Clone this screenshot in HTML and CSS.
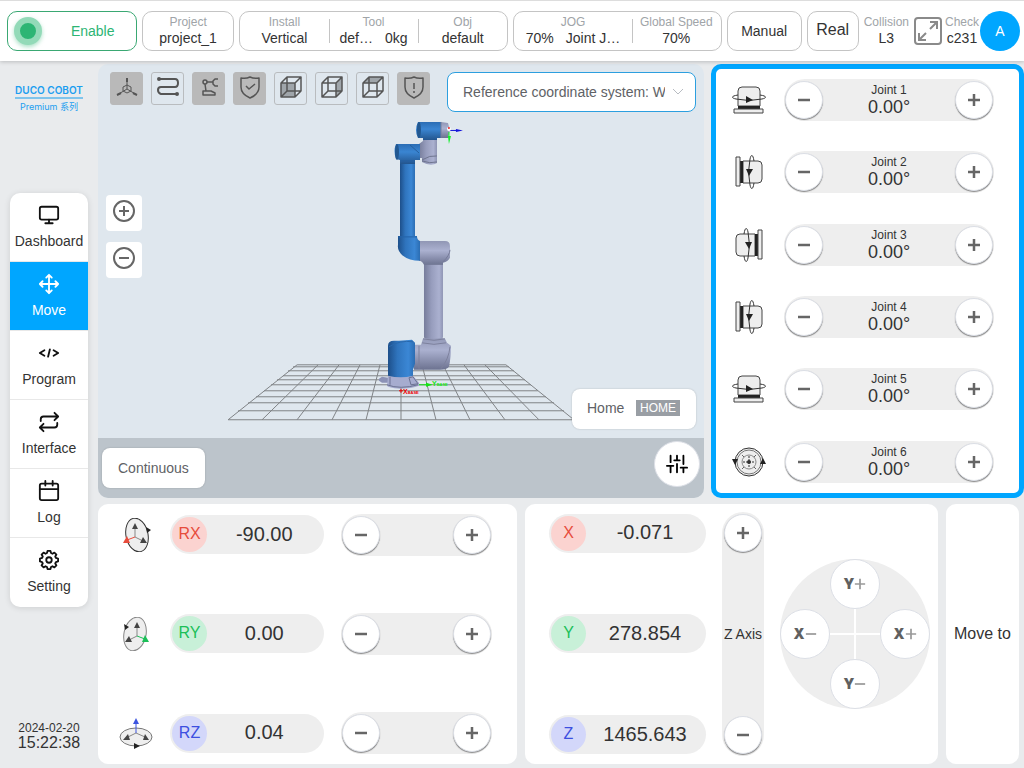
FILE: index.html
```html
<!DOCTYPE html>
<html lang="en">
<head>
    <meta charset="UTF-8">
    <meta name="viewport" content="width=device-width, initial-scale=1.0">
    <title>DUCO COBOT</title>
    <link rel="stylesheet" href="styles.css">
</head>
<body>
    <!-- Shared icons -->
    <svg class="sprite" aria-hidden="true">
        <symbol id="plus" viewBox="0 0 14 14"><path d="M7 1v12M1 7h12"/></symbol>
        <symbol id="minus" viewBox="0 0 14 14"><path d="M1 7h12"/></symbol>
        <symbol id="joint" viewBox="0 0 34 34">
            <path d="M6 23V8Q6 4 10 4H24Q28 4 28 8V23Z" fill="#eee" stroke="#444"/>
            <path d="M6 12C-1 13 -1 15 4 16Q17 19 30 16C35 15 35 13 28 12" fill="none" stroke="#333"/>
            <path d="M6 23H28V26H6Z" fill="#222"/>
            <path d="M2 26H31V30H2Z" fill="#eee" stroke="#444"/>
            <path d="M14 13L21 17L14 20Z" fill="#222"/>
        </symbol>
        <symbol id="cube" viewBox="0 0 24 24">
            <path d="M2 8H16V22H2ZM8 2H22V16H8ZM2 8L8 2M16 8L22 2M16 22L22 16M2 22L8 16"/>
        </symbol>
    </svg>

    <header class="header">
        <button class="box enable"><span class="led"></span><span class="enable-text">Enable</span></button>
        <div class="box project">
            <div class="cell"><span class="label">Project</span><span class="value">project_1</span></div>
        </div>
        <div class="box setup">
            <div class="cell"><span class="label">Install</span><span class="value">Vertical</span></div>
            <div class="cell"><span class="label">Tool</span><span class="value pair"><span>def…</span><span>0kg</span></span></div>
            <div class="cell"><span class="label">Obj</span><span class="value">default</span></div>
        </div>
        <div class="box speed">
            <div class="cell jog-cell"><span class="label">JOG</span><span class="value pair"><span>70%</span><span>Joint J…</span></span></div>
            <div class="cell"><span class="label">Global Speed</span><span class="value">70%</span></div>
        </div>
        <button class="box manual">Manual</button>
        <button class="box real">Real</button>
        <div class="cell collision"><span class="label">Collision</span><span class="value">L3</span></div>
        <div class="user">
            <button class="expand" aria-label="Full screen">
                <svg width="28" height="28" viewBox="0 0 28 28" fill="none" stroke="#8a8a8a" stroke-width="2">
                    <rect x="1" y="1" width="26" height="26" rx="3"/>
                    <path d="M16 5H23V12M23 5L16 12M5 16V23H12M5 23L12 16"/>
                </svg>
            </button>
            <div class="cell"><span class="label">Check</span><span class="value">c231</span></div>
            <button class="avatar">A</button>
        </div>
    </header>

    <div class="main">
        <aside class="sidebar">
            <div class="logo">
                <span class="logo-name">DUCO COBOT</span>
                <span class="logo-sub">Premium 系列</span>
            </div>
            <nav class="nav">
                <a href="#dashboard"><svg viewBox="0 0 24 24"><rect x="2" y="3" width="20" height="14" rx="2"/><path d="M8 21h8M12 17v4"/></svg>Dashboard</a>
                <a href="#move" class="active"><svg viewBox="0 0 24 24"><path d="M5 9l-3 3 3 3M9 5l3-3 3 3M15 19l-3 3-3-3M19 9l3 3-3 3M2 12h20M12 2v20"/></svg>Move</a>
                <a href="#program"><svg viewBox="0 0 24 24"><path d="M7 9l-5 3 5 3M17 9l5 3-5 3M13 8l-2 8"/></svg>Program</a>
                <a href="#interface"><svg viewBox="0 0 24 24"><path d="M18 2l4 4-4 4M3 11V9a3 3 0 0 1 3-3h15M6 22l-4-4 4-4M21 13v2a3 3 0 0 1-3 3H3"/></svg>Interface</a>
                <a href="#log"><svg viewBox="0 0 24 24"><rect x="2" y="4" width="20" height="18" rx="2"/><path d="M2 10h20M8 1v5M16 1v5"/></svg>Log</a>
                <a href="#setting"><svg viewBox="0 0 24 24"><circle cx="12" cy="12" r="3"/><path d="M10.400 2.100L13.600 2.100L14.200 4.400L15.800 5.200L17.900 3.900L20.100 6.100L18.800 8.200L19.600 9.800L21.900 10.400V13.600L19.600 14.200L18.800 15.800L20.100 17.900L17.900 20.100L15.800 18.800L14.200 19.600L13.600 21.900H10.400L9.800 19.600L8.200 18.800L6.100 20.100L3.900 17.900L5.200 15.800L4.400 14.200L2.100 13.600V10.400L4.400 9.800L5.200 8.200L3.900 6.100L6.100 3.900L8.200 5.200L9.800 4.400Z"/></svg>Setting</a>
            </nav>
            <div class="clock">
                <span class="date">2024-02-20</span>
                <span class="time">15:22:38</span>
            </div>
        </aside>

        <main class="content">
            <div class="top-row">
                <section class="view">
                    <div class="scene">
                        <svg class="robot" viewBox="98 64 606 374">
                            <defs>
                                <linearGradient id="blueV"><stop offset="0" stop-color="#1d4f8a"/><stop offset=".35" stop-color="#2f74bd"/><stop offset=".75" stop-color="#3b87d5"/><stop offset="1" stop-color="#2b6db3"/></linearGradient>
                                <linearGradient id="blueH" x2="0" y2="1"><stop offset="0" stop-color="#2b6db4"/><stop offset=".4" stop-color="#3a85d2"/><stop offset="1" stop-color="#23558e"/></linearGradient>
                                <linearGradient id="grayV"><stop offset="0" stop-color="#777d9b"/><stop offset=".4" stop-color="#979dbd"/><stop offset=".8" stop-color="#abb1d0"/><stop offset="1" stop-color="#8e94b3"/></linearGradient>
                                <linearGradient id="grayH" x2="0" y2="1"><stop offset="0" stop-color="#9096b4"/><stop offset=".4" stop-color="#abb1d0"/><stop offset="1" stop-color="#6c7290"/></linearGradient>
                            </defs>
                            <!-- Floor grid -->
                            <g stroke="#7f8386" fill="none">
                                <path d="M297 365H506M293 367H509M288 371H514M283 376H520M277 380H525M271 385H531M264 391H538M256 397H546M248 403H554M238 411H564M228 420H574"/>
                                <path d="M297 365L228 420M318 365L262 420M339 365L297 420M360 365L332 420M380 365L366 420M401 365V420M422 365L436 420M443 365L470 420M464 365L505 420M485 365L539 420M506 365L574 420"/>
                            </g>
                            <!-- Base -->
                            <path d="M379 379L382 377L388 378V383L382 383L379 381Z" fill="#8b92b6"/>
                            <path d="M388 376H413L419 383V386Q412 389 400 389Q388 388 387 386Z" fill="#a6accf"/>
                            <path d="M387 385Q400 390 418 385M390 377V385M409 378L413 377L418 384L411 385Z" stroke="#6a7192" fill="none"/>
                            <path d="M414 345H421L423 339Q433 335 445 339L447 343L451 346Q451 358 449 367Q447 370 440 370H414Z" fill="url(#grayH)"/>
                            <path d="M441 369Q449 359 450 347M422 343Q434 346 446 343M423 339Q434 342 445 339M419 346V369" stroke="#7c819d" fill="none"/>
                            <path d="M388 346Q388 341 394 341H399L412 340L415 343V364L413 370V376Q401 379 388 376Z" fill="url(#blueV)"/>
                            <path d="M389 347Q400 340 413 342" stroke="#2968ad" fill="none"/>
                            <!-- Lower arm -->
                            <path d="M424 262H443V338Q433 340 424 338Z" fill="url(#grayV)"/>
                            <path d="M419 241H445Q450 241 450 246V258Q448 262 443 263V265H424Q422 261 419 261Z" fill="url(#grayH)"/>
                            <path d="M443 262Q450 255 450 250M424 264H443" stroke="#747a98" fill="none"/>
                            <!-- Upper arm -->
                            <path d="M400 158H415V237H400Z" fill="url(#blueV)"/>
                            <path d="M398 236H417Q417 240 420 241V261Q409 261 403 256T398 245Z" fill="url(#blueV)"/>
                            <path d="M398 237H417" stroke="#2363a9"/>
                            <!-- Wrist -->
                            <path d="M419 144L423 141V138H437V163Q431 167 422 162V158H419Z" fill="url(#grayV)"/>
                            <path d="M422 160Q430 155 437 156M422 161Q430 164 437 162" stroke="#6e748f" fill="none"/>
                            <path d="M396 144H420V160H415V164H400V160L396 159Q393 151 396 144Z" fill="url(#blueH)"/>
                            <ellipse cx="397" cy="152" rx="2" ry="8" fill="#225891"/>
                            <path d="M400 161H415M410 145L419 153" stroke="#265f9f"/>
                            <path d="M418 122H441V138H437V140H423V138H418Q414 130 418 122Z" fill="url(#blueH)"/>
                            <ellipse cx="419" cy="130" rx="2" ry="8" fill="#225891"/>
                            <path d="M441 122L448 123L450 130L448 138L441 138Z" fill="url(#grayH)"/>
                            <path d="M441 122V138" stroke="#777d9b"/>
                            <!-- Tool axes -->
                            <path d="M450 130.500H458" stroke="#1515dc"/><path d="M456 129L463 130.500L456 132Z" fill="#1515dc"/>
                            <path d="M449 132V138" stroke="#13f02a"/><path d="M448 136H451L449 144Z" fill="#13f02a"/>
                            <circle cx="449" cy="129" r="2" fill="#fff"/><circle cx="449" cy="128" r="1" fill="#e22"/>
                            <!-- Base axes -->
                            <path d="M419 385H428" stroke="#12e612"/><path d="M426 383L433 385L426 387Z" fill="#12e612"/>
                            <path d="M399 391H403M401 389V393" stroke="#e00"/>
                            <text class="axis-name" x="403" y="394" fill="#e00">X<tspan class="axis-sub">BASE</tspan></text>
                            <text class="axis-name" x="432" y="386" fill="#12e612">Y<tspan class="axis-sub">BASE</tspan></text>
                        </svg>
                        <div class="toolbar">
                            <div class="tools">
                                <button class="tool on thin" aria-label="Axes"><svg viewBox="0 0 24 24"><path d="M12 10L16 12V16L12 18L8 16V12ZM12 14V3M12 14L2 20M12 14L22 20"/><path d="M12 3v4M2 20l4-2M22 20l-4-2" stroke-width="2"/></svg></button>
                                <button class="tool bold" aria-label="Trajectory"><svg viewBox="0 0 24 24"><path d="M3 4H19Q22 4 22 8T19 12H5Q2 12 2 15T5 19H21"/><circle cx="3" cy="4" r="1"/><circle cx="21" cy="19" r="1"/></svg></button>
                                <button class="tool on" aria-label="Robot model"><svg viewBox="0 0 24 24"><path d="M6 16H14L18 18V20H6ZM8 9L9 16M10 7H16M21 4L18 4L16 6V9L18 11H21"/><circle cx="8" cy="7" r="2"/></svg></button>
                                <button class="tool on" aria-label="Safety"><svg viewBox="0 0 24 24"><path d="M3 3Q8 4 12 2Q16 4 21 3V12Q21 19 12 23Q3 19 3 12ZM8 11L11 14L17 9"/></svg></button>
                                <button class="tool" aria-label="Front view"><svg viewBox="0 0 24 24"><path class="face" d="M2 8H16V22H2Z"/><use href="#cube"/></svg></button>
                                <button class="tool" aria-label="Side view"><svg viewBox="0 0 24 24"><path class="face" d="M16 8L22 2V16L16 22Z"/><use href="#cube"/></svg></button>
                                <button class="tool" aria-label="Top view"><svg viewBox="0 0 24 24"><path class="face" d="M2 8L8 2H22L16 8Z"/><use href="#cube"/></svg></button>
                                <button class="tool on" aria-label="Warning"><svg viewBox="0 0 24 24"><path d="M3 3Q8 4 12 2Q16 4 21 3V12Q21 19 12 23Q3 19 3 12ZM12 8V14M12 16V18"/></svg></button>
                            </div>
                            <div class="coord">
                                <select aria-label="Reference coordinate system">
                                    <option>Reference coordinate system: World</option>
                                </select>
                                <svg width="12" height="8" viewBox="0 0 12 8" fill="none" stroke="#b8bcc2"><path d="M1 1l5 5 5-5"/></svg>
                            </div>
                        </div>
                        <div class="zoom">
                            <button aria-label="Zoom in"><svg viewBox="0 0 24 24"><circle cx="12" cy="12" r="10"/><path d="M12 7v10M7 12h10"/></svg></button>
                            <button aria-label="Zoom out"><svg viewBox="0 0 24 24"><circle cx="12" cy="12" r="10"/><path d="M7 12h10"/></svg></button>
                        </div>
                        <button class="home">Home <span class="badge">HOME</span></button>
                    </div>
                    <div class="view-bar">
                        <button class="continuous">Continuous</button>
                        <button class="sliders" aria-label="Options"><svg viewBox="0 0 24 24"><path d="M5 21v-6M5 10V3M12 21v-9M12 8V3M19 21v-5M19 12V3M1 14h7M9 8h6M16 16h7"/></svg></button>
                    </div>
                </section>

                <section class="joints">
                    <div class="joint-row">
                        <svg class="icon"><use href="#joint"/></svg>
                        <div class="jog">
                            <button class="round" aria-label="Joint 1 minus"><svg><use href="#minus"/></svg></button>
                            <div class="reading"><span class="name">Joint 1</span><span class="angle">0.00°</span></div>
                            <button class="round" aria-label="Joint 1 plus"><svg><use href="#plus"/></svg></button>
                        </div>
                    </div>
                    <div class="joint-row">
                        <svg class="icon turn"><use href="#joint"/></svg>
                        <div class="jog">
                            <button class="round" aria-label="Joint 2 minus"><svg><use href="#minus"/></svg></button>
                            <div class="reading"><span class="name">Joint 2</span><span class="angle">0.00°</span></div>
                            <button class="round" aria-label="Joint 2 plus"><svg><use href="#plus"/></svg></button>
                        </div>
                    </div>
                    <div class="joint-row">
                        <svg class="icon turn-back"><use href="#joint"/></svg>
                        <div class="jog">
                            <button class="round" aria-label="Joint 3 minus"><svg><use href="#minus"/></svg></button>
                            <div class="reading"><span class="name">Joint 3</span><span class="angle">0.00°</span></div>
                            <button class="round" aria-label="Joint 3 plus"><svg><use href="#plus"/></svg></button>
                        </div>
                    </div>
                    <div class="joint-row">
                        <svg class="icon turn"><use href="#joint"/></svg>
                        <div class="jog">
                            <button class="round" aria-label="Joint 4 minus"><svg><use href="#minus"/></svg></button>
                            <div class="reading"><span class="name">Joint 4</span><span class="angle">0.00°</span></div>
                            <button class="round" aria-label="Joint 4 plus"><svg><use href="#plus"/></svg></button>
                        </div>
                    </div>
                    <div class="joint-row">
                        <svg class="icon"><use href="#joint"/></svg>
                        <div class="jog">
                            <button class="round" aria-label="Joint 5 minus"><svg><use href="#minus"/></svg></button>
                            <div class="reading"><span class="name">Joint 5</span><span class="angle">0.00°</span></div>
                            <button class="round" aria-label="Joint 5 plus"><svg><use href="#plus"/></svg></button>
                        </div>
                    </div>
                    <div class="joint-row">
                        <svg class="icon" viewBox="0 0 34 34" fill="none" stroke="#333">
                            <circle cx="17" cy="17" r="14" fill="#eee"/><circle cx="17" cy="17" r="12" stroke="#777"/><circle cx="17" cy="17" r="7" stroke="#888"/>
                            <circle cx="17" cy="17" r="2" fill="#333" stroke="none"/>
                            <path d="M11 17h12M17 11v12" stroke-dasharray="2 1"/>
                            <path d="M10 10l2 2M24 10l-2 2M10 24l2-2M24 24l-2-2" stroke="#666"/>
                            <path d="M0 14H6L3 20ZM28 19L31 13L34 19Z" fill="#222" stroke="none"/>
                        </svg>
                        <div class="jog">
                            <button class="round" aria-label="Joint 6 minus"><svg><use href="#minus"/></svg></button>
                            <div class="reading"><span class="name">Joint 6</span><span class="angle">0.00°</span></div>
                            <button class="round" aria-label="Joint 6 plus"><svg><use href="#plus"/></svg></button>
                        </div>
                    </div>
                </section>
            </div>

            <div class="bottom-row">
                <section class="panel rotation">
                    <div class="rot-row">
                        <svg class="icon" viewBox="0 0 34 34">
                            <ellipse cx="18" cy="17" rx="11" ry="17" transform="rotate(-12 18 17)" fill="#eee" stroke="#333"/>
                            <path d="M16 19V10M16 19L24 23" stroke="#888"/>
                            <path d="M16 19L8 22" stroke="#e74c3c"/>
                            <path d="M13 11L16 5L19 11ZM21 25L24 19L28 25Z" fill="#444"/>
                            <path d="M4 25L8 18L11 25Z" fill="#e74c3c"/>
                            <path d="M27 9L32 12L28 15Z" fill="#222"/>
                        </svg>
                        <div class="pill"><span class="tag red">RX</span><span class="num">-90.00</span></div>
                        <div class="jog">
                            <button class="round" aria-label="RX minus"><svg><use href="#minus"/></svg></button>
                            <button class="round" aria-label="RX plus"><svg><use href="#plus"/></svg></button>
                        </div>
                    </div>
                    <div class="rot-row">
                        <svg class="icon" viewBox="0 0 34 34">
                            <ellipse cx="16" cy="17" rx="11" ry="17" transform="rotate(12 16 17)" fill="#eee" stroke="#888"/>
                            <path d="M18 19V10M18 19L10 23" stroke="#888"/>
                            <path d="M18 19L26 22" stroke="#1bbf58"/>
                            <path d="M15 11L18 5L21 11ZM6 25L10 19L13 25Z" fill="#444"/>
                            <path d="M23 25L26 18L30 25Z" fill="#1bbf58"/>
                            <path d="M5 7L10 10L6 13Z" fill="#222"/>
                        </svg>
                        <div class="pill"><span class="tag green">RY</span><span class="num">0.00</span></div>
                        <div class="jog">
                            <button class="round" aria-label="RY minus"><svg><use href="#minus"/></svg></button>
                            <button class="round" aria-label="RY plus"><svg><use href="#plus"/></svg></button>
                        </div>
                    </div>
                    <div class="rot-row">
                        <svg class="icon" viewBox="0 0 34 34">
                            <ellipse cx="17" cy="21" rx="16" ry="9" fill="#eee" stroke="#777"/>
                            <path d="M17 17L9 21M17 17L26 21" stroke="#888"/>
                            <path d="M17 17V8" stroke="#3d55e0"/>
                            <path d="M4 24L9 18L11 24ZM24 24L26 18L30 24Z" fill="#444"/>
                            <path d="M14 8L17 2L20 8Z" fill="#3d55e0"/>
                            <path d="M15 27L21 30L15 33Z" fill="#222"/>
                        </svg>
                        <div class="pill"><span class="tag blue">RZ</span><span class="num">0.04</span></div>
                        <div class="jog">
                            <button class="round" aria-label="RZ minus"><svg><use href="#minus"/></svg></button>
                            <button class="round" aria-label="RZ plus"><svg><use href="#plus"/></svg></button>
                        </div>
                    </div>
                </section>

                <section class="panel position">
                    <div class="coords">
                        <div class="pill"><span class="tag red">X</span><span class="num">-0.071</span></div>
                        <div class="pill"><span class="tag green">Y</span><span class="num">278.854</span></div>
                        <div class="pill"><span class="tag blue">Z</span><span class="num">1465.643</span></div>
                    </div>
                    <div class="jog z-axis">
                        <button class="round" aria-label="Z plus"><svg><use href="#plus"/></svg></button>
                        <span>Z Axis</span>
                        <button class="round" aria-label="Z minus"><svg><use href="#minus"/></svg></button>
                    </div>
                    <div class="dpad">
                        <button class="up" aria-label="Y plus">Y<svg><use href="#plus"/></svg></button>
                        <button class="left" aria-label="X minus">X<svg><use href="#minus"/></svg></button>
                        <span class="cross"></span>
                        <button class="right" aria-label="X plus">X<svg><use href="#plus"/></svg></button>
                        <button class="down" aria-label="Y minus">Y<svg><use href="#minus"/></svg></button>
                    </div>
                </section>

                <button class="panel move-to">Move to</button>
            </div>
        </main>
    </div>
</body>
</html>
```
FILE: styles.css
```css
* {
    box-sizing: border-box;
}
body {
    margin: 0;
    min-height: 100vh;
    display: flex;
    flex-direction: column;
    background: #e9ebed;
    color: #333;
    font-family: "Liberation Sans", Arial, sans-serif;
    font-size: 14px;
}
button {
    padding: 0;
    border: none;
    background: white;
    color: #333;
    font: inherit;
    cursor: pointer;
}
svg {
    display: block;
    flex: none;
}
.sprite {
    position: absolute;
    width: 0;
    height: 0;
}

/* Header */
.header {
    display: flex;
    align-items: center;
    gap: 5px;
    height: 61px;
    padding: 0 4px 0 7px;
    background: white;
    border-top: 1px solid #ddd;
    box-shadow: 0 1px 4px rgba(0, 0, 0, 0.2);
    position: relative;
    z-index: 1;
}
.box {
    display: flex;
    align-items: center;
    justify-content: center;
    height: 40px;
    border: 1px solid #c4c4c4;
    border-radius: 10px;
}
.enable {
    flex: 1 1 130px;
    justify-content: flex-start;
    padding-left: 6px;
    border-color: #3aa873;
    color: #2db574;
}
.led {
    width: 28px;
    height: 28px;
    border: 6px solid #93dab8;
    border-radius: 50%;
    background: #2db574;
    box-shadow: 0 2px 4px rgba(45, 181, 116, 0.4);
}
.enable-text {
    flex: 1;
    padding-left: 7px;
}
.project {
    flex: 1 1 91px;
}
.setup {
    flex: 1 1 269px;
}
.speed {
    flex: 1 1 208px;
}
.manual {
    flex: 0 0 75px;
}
.real {
    flex: 0 0 52px;
    padding-bottom: 2px;
    font-size: 16px;
}
.cell {
    display: flex;
    flex-direction: column;
    align-items: center;
    padding-bottom: 1px;
    white-space: nowrap;
}
.box .cell {
    flex: 1 1 89px;
}
.box .jog-cell {
    flex-basis: 118px;
}
.box .cell + .cell {
    flex-basis: 89px;
    position: relative;
}
.box .cell + .cell::before {
    content: "";
    position: absolute;
    left: 0;
    top: 4px;
    bottom: 4px;
    border-left: 1px solid #c4c4c4;
}
.label {
    color: #a0a4a8;
    font-size: 12px;
    line-height: 15px;
}
.value {
    line-height: 16px;
}
.pair {
    display: flex;
    gap: 12px;
}
.user {
    display: flex;
    align-items: center;
    gap: 1px;
}
.expand {
    width: 30px;
}
.avatar {
    width: 40px;
    height: 40px;
    border-radius: 50%;
    background: #00a6ff;
    color: white;
}

/* Sidebar */
.main {
    flex: 1;
    display: flex;
}
.sidebar {
    flex: 0 0 98px;
    display: flex;
    flex-direction: column;
    align-items: center;
}
.logo {
    display: flex;
    flex-direction: column;
    align-items: center;
    height: 132px;
    padding-top: 22px;
    color: #1c9ef0;
    font-family: Inter, "Noto Sans CJK SC", sans-serif;
}
.logo-name {
    border-bottom: 2px solid #7fc4ec;
    font-size: 10px;
    font-weight: 600;
    line-height: 14px;
    white-space: nowrap;
}
.logo-sub {
    font-size: 9px;
    line-height: 15px;
}
.nav {
    width: 78px;
    border-radius: 10px;
    background: white;
    box-shadow: 0 1px 6px rgba(0, 0, 0, 0.12);
    overflow: hidden;
}
.nav a {
    display: flex;
    flex-direction: column;
    align-items: center;
    gap: 7px;
    height: 69px;
    padding-top: 11px;
    border-bottom: 1px solid #e8e8e8;
    color: #333;
    line-height: 16px;
    text-decoration: none;
}
.nav a:last-child {
    border-bottom: none;
}
.nav svg {
    width: 22px;
    height: 22px;
    fill: none;
    stroke: #111;
    stroke-width: 2;
    stroke-linecap: round;
    stroke-linejoin: round;
}
.nav .active {
    background: #00a6ff;
    color: white;
}
.nav .active svg {
    stroke: white;
}
.clock {
    display: flex;
    flex-direction: column;
    align-items: center;
    margin-top: auto;
    padding-bottom: 17px;
}
.date {
    font-size: 12px;
    line-height: 14px;
}
.time {
    font-size: 16px;
    line-height: 16px;
}

/* Content grid */
.content {
    flex: 1;
    display: grid;
    grid-template-rows: 5fr 3fr;
    gap: 6px;
    padding: 3px 0 4px;
}
.top-row {
    display: grid;
    grid-template-columns: 1fr 313px;
    gap: 7px;
}
.bottom-row {
    display: grid;
    grid-template-columns: 1fr 413px 73px;
    gap: 8px;
    padding-right: 5px;
}

/* 3D view */
.view {
    display: flex;
    flex-direction: column;
    border-radius: 10px;
    background: #dfe7ee;
    overflow: hidden;
}
.scene {
    flex: 1;
    display: flex;
    flex-direction: column;
    padding: 8px 8px 9px;
    position: relative;
}
.robot {
    position: absolute;
    left: 0;
    top: 0;
    width: 100%;
    height: 100%;
}
.axis-name {
    font-size: 7px;
    font-weight: bold;
}
.axis-sub {
    font-size: 4px;
}
.toolbar {
    display: flex;
    justify-content: space-between;
    padding-left: 4px;
    position: relative;
}
.tools {
    display: flex;
    gap: 8px;
}
.tool {
    display: flex;
    justify-content: center;
    width: 33px;
    height: 33px;
    padding-top: 2px;
    border: 1px solid #b9bcbf;
    border-radius: 3px;
    background: transparent;
}
.tool.on {
    background: #b9b9b9;
    border-color: #b9b9b9;
}
.tool svg {
    width: 24px;
    height: 24px;
    fill: none;
    stroke: #555;
    stroke-width: 1.5;
    stroke-linejoin: round;
}
.tool.thin svg {
    stroke-width: 1;
}
.tool.bold svg {
    stroke-width: 2;
}
.tool .face {
    fill: #9fa5aa;
    stroke: none;
}
.coord {
    display: flex;
    align-items: center;
    width: 249px;
    position: relative;
}
.coord select {
    width: 100%;
    height: 40px;
    padding: 0 30px 0 15px;
    appearance: none;
    border: 1px solid #2c9fdf;
    border-radius: 8px;
    background: white;
    color: #606266;
    font: inherit;
}
.coord svg {
    position: absolute;
    right: 12px;
    top: 16px;
    pointer-events: none;
}
.zoom {
    display: flex;
    flex-direction: column;
    gap: 11px;
    width: 36px;
    margin-top: 83px;
    position: relative;
}
.zoom button {
    display: flex;
    justify-content: center;
    height: 36px;
    padding-top: 4px;
    border-radius: 4px;
}
.zoom svg {
    width: 24px;
    height: 24px;
    fill: none;
    stroke: #666;
    stroke-width: 2;
}
.home {
    display: flex;
    align-items: center;
    justify-content: space-between;
    align-self: flex-end;
    width: 124px;
    height: 40px;
    margin-top: auto;
    padding: 0 16px 2px 15px;
    border-radius: 8px;
    box-shadow: 0 0 2px rgba(0, 0, 0, 0.2);
    color: #606266;
    position: relative;
}
.badge {
    padding: 0 4px;
    background: #999ea4;
    color: white;
    font-size: 12px;
    line-height: 16px;
}
.view-bar {
    display: flex;
    align-items: center;
    justify-content: space-between;
    height: 60px;
    padding: 0 4px;
    background: #bcc4cb;
}
.continuous {
    height: 40px;
    padding: 0 16px;
    border-radius: 8px;
    box-shadow: 0 0 2px rgba(0, 0, 0, 0.2);
    color: #606266;
}
.sliders {
    display: flex;
    align-items: center;
    justify-content: center;
    width: 46px;
    height: 46px;
    margin-bottom: 8px;
    border: 1px solid #dcdfe6;
    border-radius: 50%;
}
.sliders svg {
    width: 22px;
    height: 22px;
    fill: none;
    stroke: black;
    stroke-width: 2;
    stroke-linecap: round;
}

/* Jog controls */
.icon {
    width: 34px;
    height: 34px;
}
.turn {
    transform: rotate(90deg);
}
.turn-back {
    transform: rotate(90deg) scaleY(-1);
}
.jog {
    display: flex;
    align-items: center;
    justify-content: space-between;
    height: 42px;
    padding: 0 1px;
    border-radius: 21px;
    background: #eee;
}
.round {
    display: flex;
    align-items: center;
    justify-content: center;
    width: 38px;
    height: 38px;
    border: 1px solid #dcdfe6;
    border-radius: 50%;
    box-shadow: 0 1px 1px #888;
}
.round svg {
    width: 14px;
    height: 14px;
    stroke: #666;
    stroke-width: 2.5;
}
.joints {
    display: flex;
    flex-direction: column;
    justify-content: space-between;
    padding: 10px 25px 10px 16px;
    border: 5px solid #00a6ff;
    border-radius: 10px;
    background: white;
}
.joint-row {
    display: flex;
    align-items: center;
    gap: 18px;
}
.joint-row .jog {
    flex: 1;
}
.reading {
    display: flex;
    flex-direction: column;
    align-items: center;
}
.name {
    font-size: 12px;
    line-height: 14px;
}
.angle {
    font-size: 18px;
    line-height: 20px;
}

/* Bottom panels */
.panel {
    border-radius: 10px;
    background: white;
}
.rotation {
    display: flex;
    flex-direction: column;
    justify-content: space-between;
    padding: 10px 25px 10px 21px;
}
.rot-row {
    display: flex;
    align-items: center;
    gap: 17px;
}
.rot-row .pill,
.rot-row .jog {
    flex: 1;
}
.pill {
    display: flex;
    align-items: center;
    height: 39px;
    padding: 0 2px;
    border-radius: 20px;
    background: #eee;
}
.tag {
    width: 35px;
    height: 35px;
    border-radius: 50%;
    font-size: 16px;
    line-height: 34px;
    text-align: center;
}
.red {
    background: #fbd3d0;
    color: #e74c3c;
}
.green {
    background: #c8f0d8;
    color: #1bbf58;
}
.blue {
    background: #d3d7fa;
    color: #3d4fe0;
}
.num {
    flex: 1;
    padding-bottom: 1px;
    font-size: 20px;
    text-align: center;
}
.position {
    display: flex;
    align-items: center;
    gap: 16px;
    padding: 8px 8px 8px 24px;
}
.coords {
    flex: 1;
    align-self: stretch;
    display: flex;
    flex-direction: column;
    justify-content: space-between;
    padding: 2px 0;
}
.z-axis {
    flex-direction: column;
    align-self: stretch;
    width: 42px;
    height: auto;
    padding: 2px 0;
    white-space: nowrap;
}
.dpad {
    display: grid;
    grid-template: repeat(3, 50px) / repeat(3, 50px);
    grid-template-areas: ". up ." "left cross right" ". down .";
    border-radius: 50%;
    background: #eee;
}
.dpad button {
    display: flex;
    align-items: center;
    justify-content: center;
    border: 1px solid #dcdfe6;
    border-radius: 50%;
    color: #606060;
    font-family: Inter, sans-serif;
    font-size: 14px;
    font-weight: 900;
}
.dpad svg {
    width: 12px;
    height: 12px;
    stroke: #999;
    stroke-width: 2;
}
.up {
    grid-area: up;
}
.left {
    grid-area: left;
}
.right {
    grid-area: right;
}
.down {
    grid-area: down;
}
.cross {
    grid-area: cross;
    background: linear-gradient(white, white) center / 2px 100% no-repeat,
        linear-gradient(white, white) center / 100% 2px no-repeat;
}
.move-to {
    font-size: 16px;
}
```
